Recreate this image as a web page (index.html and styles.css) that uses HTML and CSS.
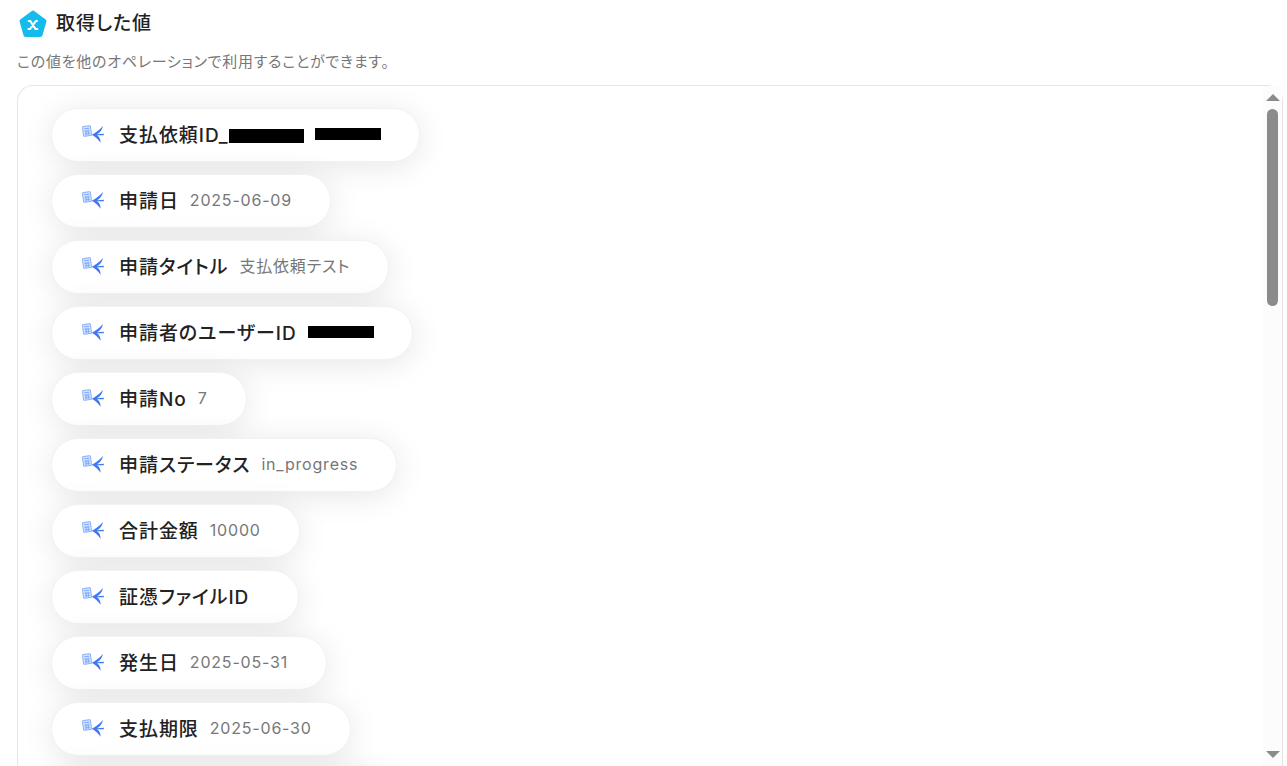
FILE: index.html
```html
<!DOCTYPE html>
<html lang="ja">
  <head>
    <meta charset="UTF-8" />
    <meta name="viewport" content="width=device-width, initial-scale=1.0" />
    <title>取得した値</title>
    <link rel="stylesheet" href="styles.css">
  </head>
  <body>
    <!-- アイコン定義 -->
    <svg class="icon-defs" aria-hidden="true">
      <symbol id="icon-app" viewBox="0 0 22 18">
        <g transform="rotate(-7 5 6)">
          <rect x="1" y="1" width="8" height="10" rx="1" fill="#d3e3ff" stroke="#86b0fb" />
          <path d="M2.500 3.500h5M2.500 6.200h5M2.500 8.800h5M3.900 5v5M6.200 5v5" stroke="#7fa9fa" fill="none" />
        </g>
        <path d="M9.800 9.700C14 7.600 17.500 5 20.900 1.100C20.400 5 17.800 8 14.800 9.200L21.800 8.700V10.300L15 10.300C17.400 11.800 18.600 14 18.600 17.800C16 13.800 13 11.800 9.800 9.700Z" fill="#3f78f2" />
      </symbol>
    </svg>

    <!-- 見出し -->
    <header class="header">
      <div class="title-row">
        <svg class="title-icon" viewBox="0 0 28 28" aria-hidden="true">
          <path d="M14 2.500 25.500 11 21.500 25H6.500L2.500 11Z" fill="#14bbec" stroke="#14bbec" stroke-width="4" stroke-linejoin="round" />
          <path d="M9.700 10.900H11.200L16.400 18.900H18.300M18 10.900H17L11.200 18.900H9.400" fill="none" stroke="#fff" stroke-width="2" stroke-linecap="round" stroke-linejoin="round" />
        </svg>
        <h1 class="title">取得した値</h1>
      </div>
      <p class="description">この値を他のオペレーションで利用することができます。</p>
    </header>

    <!-- 値の一覧 -->
    <main class="panel">
      <ul class="value-list">
        <li class="value-item">
          <svg class="item-icon"><use href="#icon-app" /></svg>
          <span class="label">支払依頼ID_<span class="mask mask-label"></span></span>
          <span class="value"><span class="mask"></span></span>
        </li>
        <li class="value-item">
          <svg class="item-icon"><use href="#icon-app" /></svg>
          <span class="label">申請日</span>
          <span class="value">2025-06-09</span>
        </li>
        <li class="value-item">
          <svg class="item-icon"><use href="#icon-app" /></svg>
          <span class="label">申請タイトル</span>
          <span class="value">支払依頼テスト</span>
        </li>
        <li class="value-item">
          <svg class="item-icon"><use href="#icon-app" /></svg>
          <span class="label">申請者のユーザーID</span>
          <span class="value"><span class="mask"></span></span>
        </li>
        <li class="value-item">
          <svg class="item-icon"><use href="#icon-app" /></svg>
          <span class="label">申請No</span>
          <span class="value">7</span>
        </li>
        <li class="value-item">
          <svg class="item-icon"><use href="#icon-app" /></svg>
          <span class="label">申請ステータス</span>
          <span class="value">in_progress</span>
        </li>
        <li class="value-item">
          <svg class="item-icon"><use href="#icon-app" /></svg>
          <span class="label">合計金額</span>
          <span class="value">10000</span>
        </li>
        <li class="value-item">
          <svg class="item-icon"><use href="#icon-app" /></svg>
          <span class="label">証憑ファイルID</span>
          <span class="value"></span>
        </li>
        <li class="value-item">
          <svg class="item-icon"><use href="#icon-app" /></svg>
          <span class="label">発生日</span>
          <span class="value">2025-05-31</span>
        </li>
        <li class="value-item">
          <svg class="item-icon"><use href="#icon-app" /></svg>
          <span class="label">支払期限</span>
          <span class="value">2025-06-30</span>
        </li>
        <li class="value-item"></li>
      </ul>

      <!-- スクロールバー -->
      <div class="scrollbar" aria-hidden="true">
        <span class="arrow arrow-up"></span>
        <span class="track"><span class="thumb"></span></span>
        <span class="arrow arrow-down"></span>
      </div>
    </main>
  </body>
</html>
```

FILE: styles.css
```css
* {
  box-sizing: border-box;
}

body {
  margin: 0;
  height: 100vh;
  display: flex;
  flex-direction: column;
  overflow: hidden;
  background-color: #fff;
  color: #222;
  font-family: Inter, "Noto Sans CJK JP", sans-serif;
  font-feature-settings: "palt";
}

.icon-defs {
  display: none;
}

/* 見出し */
.header {
  padding: 8px 17px 11px;
}

.title-row {
  display: flex;
  align-items: center;
  gap: 9px;
  height: 32px;
  padding-left: 2px;
}

.title-icon {
  width: 28px;
  height: 28px;
}

.title,
.label {
  font-size: 19px;
  font-weight: 500;
  line-height: 32px;
  letter-spacing: 0.05em;
}

.title {
  margin: 0;
}

.description {
  margin: 10px 0 0;
  font-size: 15px;
  line-height: 24px;
  letter-spacing: 0.05em;
  color: #777;
}

/* 値の一覧 */
.panel {
  flex: 1;
  min-height: 0;
  display: flex;
  margin: 0 4px 0 17px;
  border: 1px solid #e5e5e5;
  border-bottom: 0;
  border-radius: 16px 16px 0 0;
}

.value-list {
  flex: 1;
  display: flex;
  flex-direction: column;
  align-items: flex-start;
  gap: 12px;
  margin: 0;
  padding: 22px 33px 0;
  list-style: none;
  overflow: hidden;
  border-top-left-radius: 16px;
}

.value-item {
  flex: none;
  display: flex;
  align-items: center;
  height: 54px;
  padding: 0 38px 2px 30px;
  border: 1px solid #f2f2f2;
  border-radius: 27px;
  background-color: #fff;
  box-shadow: 0 4px 32px rgba(0, 0, 0, 0.1);
}

.value-item:empty {
  width: 340px;
}

.item-icon {
  width: 22px;
  height: 18px;
  margin-right: 15px;
}

.label {
  display: flex;
  align-items: center;
  padding-top: 3px;
  margin-right: 11px;
}

.value {
  font-size: 16px;
  line-height: 24px;
  letter-spacing: 0.05em;
  color: #777;
}

/* 伏せ字 */
.mask {
  display: block;
  width: 66px;
  height: 12px;
  background-color: #000;
}

.mask-label {
  width: 75px;
  height: 14px;
}

/* スクロールバー */
.scrollbar {
  display: flex;
  flex-direction: column;
  align-items: center;
  gap: 8px;
  width: 19px;
  padding: 8px 0;
  background-color: #fcfcfc;
}

.arrow {
  border: 7px solid transparent;
}

.arrow-up {
  border-top: 0;
  border-bottom: 7px solid #8b8b8b;
}

.arrow-down {
  border-bottom: 0;
  border-top: 7px solid #8b8b8b;
}

.track {
  flex: 1;
  width: 11px;
}

.thumb {
  display: block;
  height: 31%;
  border-radius: 6px;
  background-color: #8b8b8b;
}
```
